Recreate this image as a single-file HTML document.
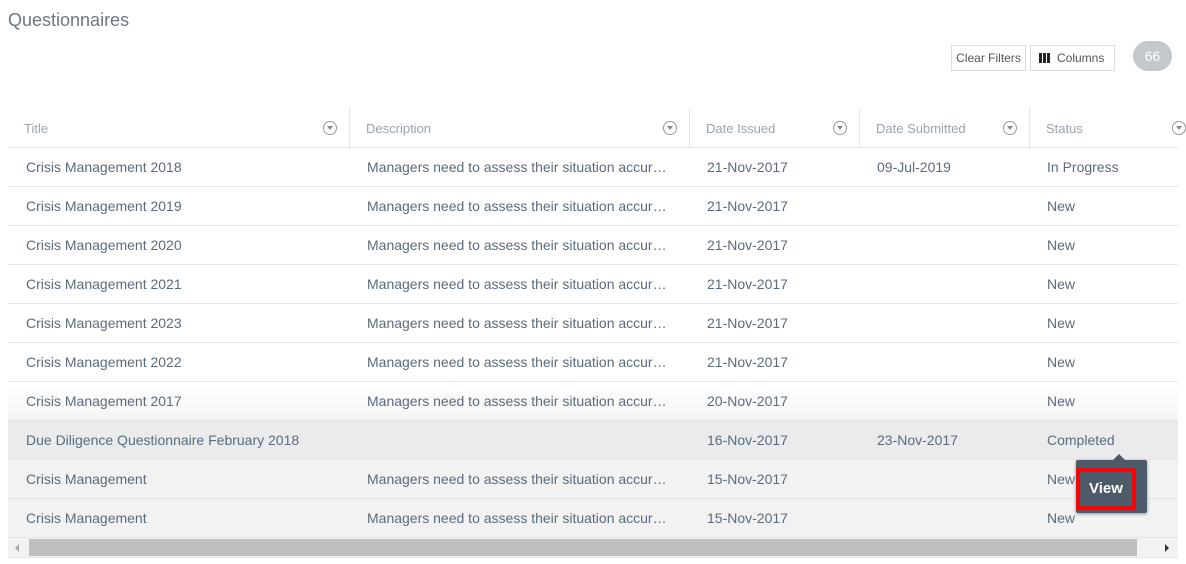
<!DOCTYPE html>
<html><head><style>
body{margin:0;width:1186px;height:564px;background:#fff;font-family:"Liberation Sans",sans-serif;position:relative;overflow:hidden;color:#5b6b7c}
.t{position:absolute;left:8px;top:10px;font-size:18px;color:#6b7785}
.btn{position:absolute;top:45px;height:26px;border:1px solid #ddd;font-size:12px;line-height:24px;color:#555;background:#fff;box-sizing:border-box}
.badge{position:absolute;left:1133px;top:41px;width:39px;height:30px;border-radius:15px;background:#c3c8cd;color:#fff;font-size:14px;text-align:center;line-height:30px}
.row{position:absolute;left:8px;width:1170px;height:39px;border-bottom:1px solid #e4e4e4;box-sizing:border-box;font-size:14px}
.row span{position:absolute;top:11px;white-space:nowrap}
.hd span{color:#9aa3ad;font-size:13px;top:12px}
.sep{position:absolute;top:0;height:38px;width:1px;background:#e4e4e4}
.f{position:absolute;top:12px;width:12px;height:12px;border:1px solid #999;border-radius:50%}
.f:after{content:"";position:absolute;left:3px;top:4px;border-left:3px solid transparent;border-right:3px solid transparent;border-top:4px solid #888}
</style></head><body>
<div class="t">Questionnaires</div>
<div class="btn" style="left:951px;width:75px;text-align:center">Clear Filters</div>
<div class="btn" style="left:1030px;width:85px;padding-left:26px">Columns
<div style="position:absolute;left:8px;top:7px;width:3px;height:10px;background:#222;box-shadow:4px 0 #222,8px 0 #222"></div></div>
<div class="badge">66</div>
<div class="row hd" style="top:109px">
<span style="left:16px">Title</span><div class="f" style="left:315px"></div><div class="sep" style="left:341px"></div>
<span style="left:358px">Description</span><div class="f" style="left:655px"></div><div class="sep" style="left:681px"></div>
<span style="left:698px">Date Issued</span><div class="f" style="left:825px"></div><div class="sep" style="left:851px"></div>
<span style="left:868px">Date Submitted</span><div class="f" style="left:995px"></div><div class="sep" style="left:1021px"></div>
<span style="left:1038px">Status</span><div class="f" style="left:1164px"></div>
</div>
<div class="row" style="top:148px"><span style="left:18px">Crisis Management 2018</span><span style="left:359px">Managers need to assess their situation accur…</span><span style="left:699px">21-Nov-2017</span><span style="left:869px">09-Jul-2019</span><span style="left:1039px">In Progress</span></div>
<div class="row" style="top:187px"><span style="left:18px">Crisis Management 2019</span><span style="left:359px">Managers need to assess their situation accur…</span><span style="left:699px">21-Nov-2017</span><span style="left:1039px">New</span></div>
<div class="row" style="top:226px"><span style="left:18px">Crisis Management 2020</span><span style="left:359px">Managers need to assess their situation accur…</span><span style="left:699px">21-Nov-2017</span><span style="left:1039px">New</span></div>
<div class="row" style="top:265px"><span style="left:18px">Crisis Management 2021</span><span style="left:359px">Managers need to assess their situation accur…</span><span style="left:699px">21-Nov-2017</span><span style="left:1039px">New</span></div>
<div class="row" style="top:304px"><span style="left:18px">Crisis Management 2023</span><span style="left:359px">Managers need to assess their situation accur…</span><span style="left:699px">21-Nov-2017</span><span style="left:1039px">New</span></div>
<div class="row" style="top:343px"><span style="left:18px">Crisis Management 2022</span><span style="left:359px">Managers need to assess their situation accur…</span><span style="left:699px">21-Nov-2017</span><span style="left:1039px">New</span></div>
<div class="row" style="top:382px;background:linear-gradient(#fff,#f4f4f4)"><span style="left:18px">Crisis Management 2017</span><span style="left:359px">Managers need to assess their situation accur…</span><span style="left:699px">20-Nov-2017</span><span style="left:1039px">New</span></div>
<div class="row" style="top:421px;background:#e9ebed"><span style="left:18px">Due Diligence Questionnaire February 2018</span><span style="left:699px">16-Nov-2017</span><span style="left:869px">23-Nov-2017</span><span style="left:1039px">Completed</span></div>
<div class="row" style="top:460px;background:#f2f2f2"><span style="left:18px">Crisis Management</span><span style="left:359px">Managers need to assess their situation accur…</span><span style="left:699px">15-Nov-2017</span><span style="left:1039px">New</span></div>
<div class="row" style="top:499px;background:#f2f2f2"><span style="left:18px">Crisis Management</span><span style="left:359px">Managers need to assess their situation accur…</span><span style="left:699px">15-Nov-2017</span><span style="left:1039px">New</span></div>
<div style="position:absolute;left:8px;top:538px;width:1170px;height:19px;background:#f2f2f2;border-bottom:1px solid #e4e4e4"></div>
<div style="position:absolute;left:29px;top:539px;width:1108px;height:17px;background:#bfbfbf"></div>
<div style="position:absolute;left:15px;top:544px;border-right:4px solid #aaa;border-top:4px solid transparent;border-bottom:4px solid transparent"></div>
<div style="position:absolute;left:1165px;top:544px;border-left:4px solid #333;border-top:4px solid transparent;border-bottom:4px solid transparent"></div>
<div style="position:absolute;left:1076px;top:460px;width:71px;height:53px;background:#4d5a69;border-radius:2px;box-shadow:0 1px 3px rgba(0,0,0,.4)"></div>
<div style="position:absolute;left:1113px;top:454px;border-bottom:6px solid #4d5a69;border-left:6px solid transparent;border-right:6px solid transparent"></div>
<div style="position:absolute;left:1076px;top:468px;width:60px;height:42px;border:4px solid #f00;box-sizing:border-box;color:#fff;font-weight:bold;font-size:15px;text-align:center;line-height:34px">View</div>
</body></html>
